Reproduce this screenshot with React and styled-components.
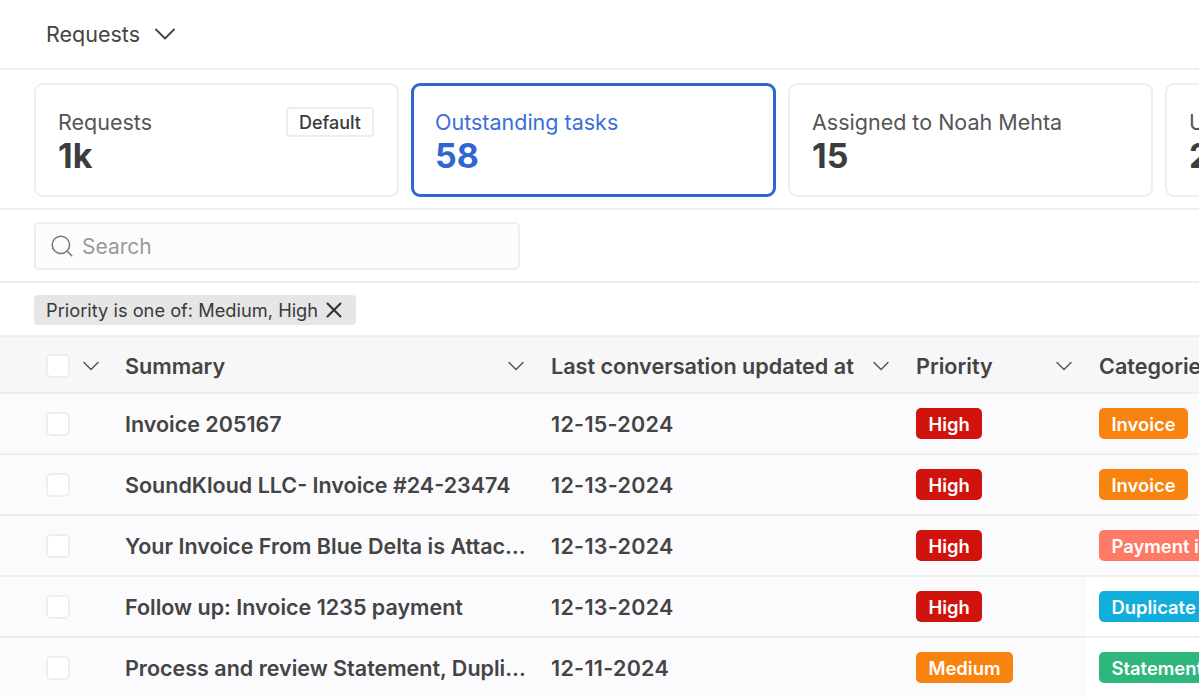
import React from "react"
import styled, { createGlobalStyle } from "styled-components"
import { ChevronDown, Search, X } from "lucide-react"

const cards = [
  { label: "Requests", value: "1k", isDefault: true },
  { label: "Outstanding tasks", value: "58", active: true },
  { label: "Assigned to Noah Mehta", value: "15" },
  { label: "Unassigned", value: "23" },
]

const rows = [
  { summary: "Invoice 205167", date: "12-15-2024", priority: "High", category: "Invoice", color: "#f8830e" },
  { summary: "SoundKloud LLC- Invoice #24-23474", date: "12-13-2024", priority: "High", category: "Invoice", color: "#f8830e" },
  { summary: "Your Invoice From Blue Delta is Attached", date: "12-13-2024", priority: "High", category: "Payment information", color: "#ff7a66" },
  { summary: "Follow up: Invoice 1235 payment", date: "12-13-2024", priority: "High", category: "Duplicate invoice", color: "#12aedb", plain: true },
  { summary: "Process and review Statement, Duplicate", date: "12-11-2024", priority: "Medium", category: "Statement", color: "#2eb67d", plain: true },
]

const priorityColors = { High: "#d0130d", Medium: "#f8830e" }

function App() {
  return (
    <Page>
      <GlobalStyle />
      <TopBar>
        <ViewTitle>Requests</ViewTitle>
        <ChevronDown size={36} strokeWidth={1.25} color="#444" />
      </TopBar>

      <CardStrip>
        {cards.map((card) => (
          <Card key={card.label} $active={card.active}>
            <CardLabel $active={card.active}>{card.label}</CardLabel>
            <CardValue $active={card.active}>{card.value}</CardValue>
            {card.isDefault && <DefaultTag>Default</DefaultTag>}
          </Card>
        ))}
      </CardStrip>

      <SearchRow>
        <SearchBox>
          <Search size={26} strokeWidth={1.4} color="#777" />
          <SearchText>Search</SearchText>
        </SearchBox>
      </SearchRow>

      <FilterRow>
        <FilterChip>
          Priority is one of: Medium, High
          <X size={26} strokeWidth={1.9} color="#333" />
        </FilterChip>
      </FilterRow>

      <HeadRow>
        <SelectCell>
          <Checkbox />
          <ChevronDown size={28} strokeWidth={1.25} color="#555" />
        </SelectCell>
        <HeadCell>
          Summary
          <ChevronDown size={28} strokeWidth={1.25} color="#555" />
        </HeadCell>
        <HeadCell>
          Last conversation updated at
          <ChevronDown size={28} strokeWidth={1.25} color="#555" />
        </HeadCell>
        <HeadCell>
          Priority
          <ChevronDown size={28} strokeWidth={1.25} color="#555" />
        </HeadCell>
        <HeadCell>Categories</HeadCell>
      </HeadRow>

      {rows.map((row) => (
        <BodyRow key={row.summary}>
          <SelectCell>
            <Checkbox />
          </SelectCell>
          <SummaryCell>
            <SummaryText>{row.summary}</SummaryText>
          </SummaryCell>
          <DateCell>{row.date}</DateCell>
          <BadgeCell>
            <Badge $color={priorityColors[row.priority]}>{row.priority}</Badge>
          </BadgeCell>
          <CategoryCell $plain={row.plain}>
            <Badge $color={row.color}>{row.category}</Badge>
          </CategoryCell>
        </BodyRow>
      ))}
    </Page>
  )
}

const GlobalStyle = createGlobalStyle`
  html, body {
    margin: 0;
    height: 697px;
    overflow: hidden;
    background: #fff;
  }
`

const Page = styled.div`
  width: 1199px;
  height: 697px;
  overflow: hidden;
  background: #fff;
  color: #444;
  font-family: Inter, "Liberation Sans", sans-serif;
`

const TopBar = styled.div`
  display: flex;
  align-items: center;
  gap: 7px;
  height: 68px;
  padding-left: 46px;
  border-bottom: 2px solid #eeeeee;
`

const ViewTitle = styled.div`
  font-size: 21.5px;
  color: #444;
`

const CardStrip = styled.div`
  display: flex;
  gap: 12px;
  padding: 13px 0 11px 34px;
  border-bottom: 2px solid #eeeeee;
  overflow: hidden;
`

const Card = styled.div`
  position: relative;
  flex: 0 0 365px;
  box-sizing: border-box;
  height: 114px;
  padding: ${(p) => (p.$active ? "23px 21px 0" : "24px 22px 0")};
  border: ${(p) => (p.$active ? "3px solid #2f66d0" : "2px solid #eeeeee")};
  border-radius: 9px;
`

const CardLabel = styled.div`
  font-size: 21.5px;
  line-height: 26px;
  white-space: nowrap;
  color: ${(p) => (p.$active ? "#3a6fd8" : "#555")};
`

const CardValue = styled.div`
  font-size: 34px;
  line-height: 41px;
  font-weight: 700;
  color: ${(p) => (p.$active ? "#2f66d0" : "#3c3c3c")};
`

const DefaultTag = styled.div`
  position: absolute;
  top: 22px;
  right: 23px;
  box-sizing: border-box;
  height: 30px;
  padding: 0 11px;
  display: flex;
  align-items: center;
  border: 2px solid #ededed;
  border-radius: 4px;
  font-size: 18px;
  font-weight: 500;
  color: #3a3a3a;
`

const SearchRow = styled.div`
  padding: 12px 0 11px 34px;
  border-bottom: 2px solid #eeeeee;
`

const SearchBox = styled.div`
  box-sizing: border-box;
  display: flex;
  align-items: center;
  gap: 7px;
  width: 486px;
  height: 48px;
  padding-left: 13px;
  background: #fcfcfc;
  border: 2px solid #eeeeee;
  border-radius: 5px;
`

const SearchText = styled.div`
  font-size: 21px;
  color: #999;
`

const FilterRow = styled.div`
  padding: 12px 0 10px 34px;
  border-bottom: 2px solid #eeeeee;
`

const FilterChip = styled.div`
  display: inline-flex;
  align-items: center;
  gap: 3px;
  height: 30px;
  padding: 0 9px 0 12px;
  vertical-align: top;
  background: #e6e6e6;
  border-radius: 4px;
  font-size: 18.25px;
  color: #3a3a3a;
`

const tableColumns = "125px 426px 365px 183px 1fr"

const HeadRow = styled.div`
  display: grid;
  grid-template-columns: ${tableColumns};
  height: 57px;
  box-sizing: border-box;
  padding-top: 2px;
  background: #f7f7f7;
  border-bottom: 2px solid #eeeeee;
`

const BodyRow = styled.div`
  display: grid;
  grid-template-columns: ${tableColumns};
  height: 61px;
  box-sizing: border-box;
  background: #fbfbfd;
  border-bottom: 2px solid #eeeeee;
`

const SelectCell = styled.div`
  display: flex;
  align-items: center;
  gap: 7px;
  padding-left: 46px;
`

const Checkbox = styled.div`
  box-sizing: border-box;
  width: 24px;
  height: 24px;
  background: #fff;
  border: 2px solid #eeeeee;
  border-radius: 5px;
`

const HeadCell = styled.div`
  display: flex;
  align-items: center;
  justify-content: space-between;
  padding-right: 21px;
  font-size: 21.6px;
  font-weight: 600;
  color: #444;
  white-space: nowrap;
  overflow: hidden;

  &:last-child {
    padding-right: 0;
  }
`

const SummaryCell = styled.div`
  display: flex;
  align-items: center;
  padding-right: 24px;
  min-width: 0;
`

const SummaryText = styled.div`
  font-size: 21.5px;
  font-weight: 600;
  color: #444;
  white-space: nowrap;
  overflow: hidden;
  text-overflow: ellipsis;
`

const DateCell = styled.div`
  display: flex;
  align-items: center;
  font-size: 21.5px;
  font-weight: 600;
  letter-spacing: 0.3px;
  color: #444;
`

const BadgeCell = styled.div`
  display: flex;
  align-items: center;
`

const CategoryCell = styled.div`
  display: flex;
  align-items: center;
  margin-left: -13px;
  padding-left: 13px;
  overflow: hidden;
  background: ${(p) => (p.$plain ? "#fff" : "transparent")};
`

const Badge = styled.div`
  flex: none;
  display: flex;
  align-items: center;
  height: 31px;
  padding: 0 12.5px;
  border-radius: 5px;
  background: ${(p) => p.$color};
  color: #fff;
  font-size: 18.4px;
  font-weight: 600;
  white-space: nowrap;
`

export default App
